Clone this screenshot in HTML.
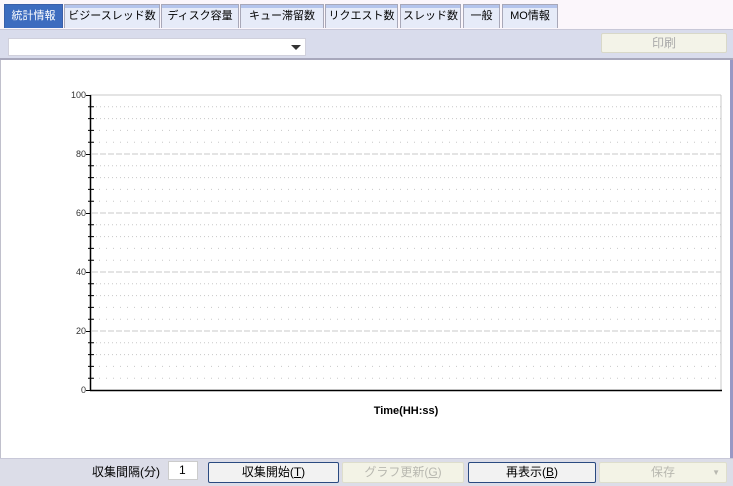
<!DOCTYPE html>
<html><head><meta charset="utf-8"><style>
*{margin:0;padding:0;box-sizing:border-box}
body{width:733px;height:486px;overflow:hidden;background:#fff;font-family:"Liberation Sans","Noto Sans CJK JP",sans-serif;font-size:12px;position:relative}
.top{position:absolute;left:0;top:0;width:733px;height:29px;background:#fbf6fb}
.tab{position:absolute;top:4px;height:24px;border:1px solid #a8a8b8;border-bottom:none;background:linear-gradient(#b4c4ec 0,#b4c4ec 3px,#e6ebf8 3px);color:#000;font-size:11px;line-height:23px;text-align:center;white-space:nowrap;overflow:hidden}
.tab.sel{background:#3d6cbf;color:#fff;border-color:#3a5fa8}
.tb{position:absolute;left:0;top:29px;width:733px;height:31px;background:#d9dcec;border-top:1px solid #c8c8d8;border-bottom:2px solid #a8a8bc}
.combo{position:absolute;left:8px;top:8px;width:298px;height:18px;background:#fff;border:1px solid #d0d0dc}
.combo:after{content:"";position:absolute;right:4px;top:6px;border-left:5px solid transparent;border-right:5px solid transparent;border-top:5px solid #333}
.btn{position:absolute;border:1px solid #d8d8c8;border-radius:2px;background:#f3f3e8;color:#aaa;text-align:center;font-size:12px}
.main{position:absolute;left:0;top:60px;width:733px;height:398px;border-left:1px solid #c0c0cc;border-right:3px solid #9898c4}
.bot{position:absolute;left:0;top:458px;width:733px;height:28px;background:#dcdde8;border-top:1px solid #c8c8d8}
.b2{position:absolute;top:3px;height:21px;border:1px solid #2a4a80;border-radius:2px;background:#f2f2f2;text-align:center;line-height:19px;font-size:12px}
.d2{position:absolute;top:3px;height:21px;border:1px solid #dedecc;border-radius:2px;background:#f3f3e6;color:#b8b8b0;text-align:center;line-height:19px}
</style></head><body>
<div class="top">
<div class="tab sel" style="left:4px;width:59px">統計情報</div>
<div class="tab" style="left:64px;width:96px">ビジースレッド数</div>
<div class="tab" style="left:161px;width:78px">ディスク容量</div>
<div class="tab" style="left:240px;width:84px">キュー滞留数</div>
<div class="tab" style="left:325px;width:73px">リクエスト数</div>
<div class="tab" style="left:400px;width:61px">スレッド数</div>
<div class="tab" style="left:463px;width:37px">一般</div>
<div class="tab" style="left:502px;width:56px">MO情報</div>
</div>
<div class="tb">
<div class="combo"></div>
<div class="btn" style="left:601px;top:3px;width:126px;height:20px;line-height:18px">印刷</div>
</div>
<div class="main">
<svg width="729" height="398" style="position:absolute;left:-1px;top:0" font-family="Liberation Sans,sans-serif">
<g transform="translate(0,-60)">
<line x1="90" y1="95" x2="721" y2="95" stroke="#c8c8c8"/>
<line x1="721" y1="95" x2="721" y2="390" stroke="#c8c8c8"/>
<g stroke="#c8c8c8" stroke-dasharray="1,3">
<line x1="92" y1="106.8" x2="721" y2="106.8"/><line x1="92" y1="118.6" x2="721" y2="118.6"/><line x1="92" y1="130.4" x2="721" y2="130.4" stroke-dasharray="1,6"/><line x1="92" y1="142.2" x2="721" y2="142.2" stroke-dasharray="1,6"/>
<line x1="92" y1="165.8" x2="721" y2="165.8"/><line x1="92" y1="177.6" x2="721" y2="177.6"/><line x1="92" y1="189.4" x2="721" y2="189.4" stroke-dasharray="1,6"/><line x1="92" y1="201.2" x2="721" y2="201.2" stroke-dasharray="1,6"/>
<line x1="92" y1="224.8" x2="721" y2="224.8"/><line x1="92" y1="236.6" x2="721" y2="236.6"/><line x1="92" y1="248.4" x2="721" y2="248.4" stroke-dasharray="1,6"/><line x1="92" y1="260.2" x2="721" y2="260.2" stroke-dasharray="1,6"/>
<line x1="92" y1="283.8" x2="721" y2="283.8"/><line x1="92" y1="295.6" x2="721" y2="295.6"/><line x1="92" y1="307.4" x2="721" y2="307.4" stroke-dasharray="1,6"/><line x1="92" y1="319.2" x2="721" y2="319.2" stroke-dasharray="1,6"/>
<line x1="92" y1="342.8" x2="721" y2="342.8"/><line x1="92" y1="354.6" x2="721" y2="354.6"/><line x1="92" y1="366.4" x2="721" y2="366.4" stroke-dasharray="1,6"/><line x1="92" y1="378.2" x2="721" y2="378.2" stroke-dasharray="1,6"/>
</g>
<g stroke="#c8c8c8" stroke-dasharray="6,2">
<line x1="92" y1="154" x2="721" y2="154"/><line x1="92" y1="213" x2="721" y2="213"/><line x1="92" y1="272" x2="721" y2="272"/><line x1="92" y1="331" x2="721" y2="331"/>
</g>
<line x1="90.5" y1="95" x2="90.5" y2="391" stroke="#000" stroke-width="1.5"/>
<line x1="90" y1="390.5" x2="722" y2="390.5" stroke="#000" stroke-width="1.5"/>
<g stroke="#000">
<path d="M86 95.5H91M86 154.5H91M86 213.5H91M86 272.5H91M86 331.5H91M86 390.5H91"/>
<path d="M88 106.8H94M88 118.6H94M88 130.4H94M88 142.2H94M88 165.8H94M88 177.6H94M88 189.4H94M88 201.2H94M88 224.8H94M88 236.6H94M88 248.4H94M88 260.2H94M88 283.8H94M88 295.6H94M88 307.4H94M88 319.2H94M88 342.8H94M88 354.6H94M88 366.4H94M88 378.2H94"/>
</g>
<g font-size="9" fill="#333" text-anchor="end">
<text x="86" y="98">100</text><text x="86" y="157">80</text><text x="86" y="216">60</text><text x="86" y="275">40</text><text x="86" y="334">20</text><text x="86" y="393">0</text>
</g>
<text x="406" y="414" font-size="11" font-weight="bold" text-anchor="middle">Time(HH:ss)</text>
</g></svg>
</div>
<div class="bot">
<div style="position:absolute;left:92px;top:4px;font-size:12px">収集間隔(分)</div>
<div style="position:absolute;left:168px;top:2px;width:30px;height:19px;background:#fff;border:1px solid #ccc;padding-left:10px;line-height:17px">1</div>
<div class="b2" style="left:208px;width:131px">収集開始(<u>T</u>)</div>
<div class="d2" style="left:342px;width:122px">グラフ更新(<u>G</u>)</div>
<div class="b2" style="left:468px;width:128px">再表示(<u>B</u>)</div>
<div class="d2" style="left:599px;width:128px">保存<span style="position:absolute;right:6px;font-size:8px">▼</span></div>
</div>
</body></html>
